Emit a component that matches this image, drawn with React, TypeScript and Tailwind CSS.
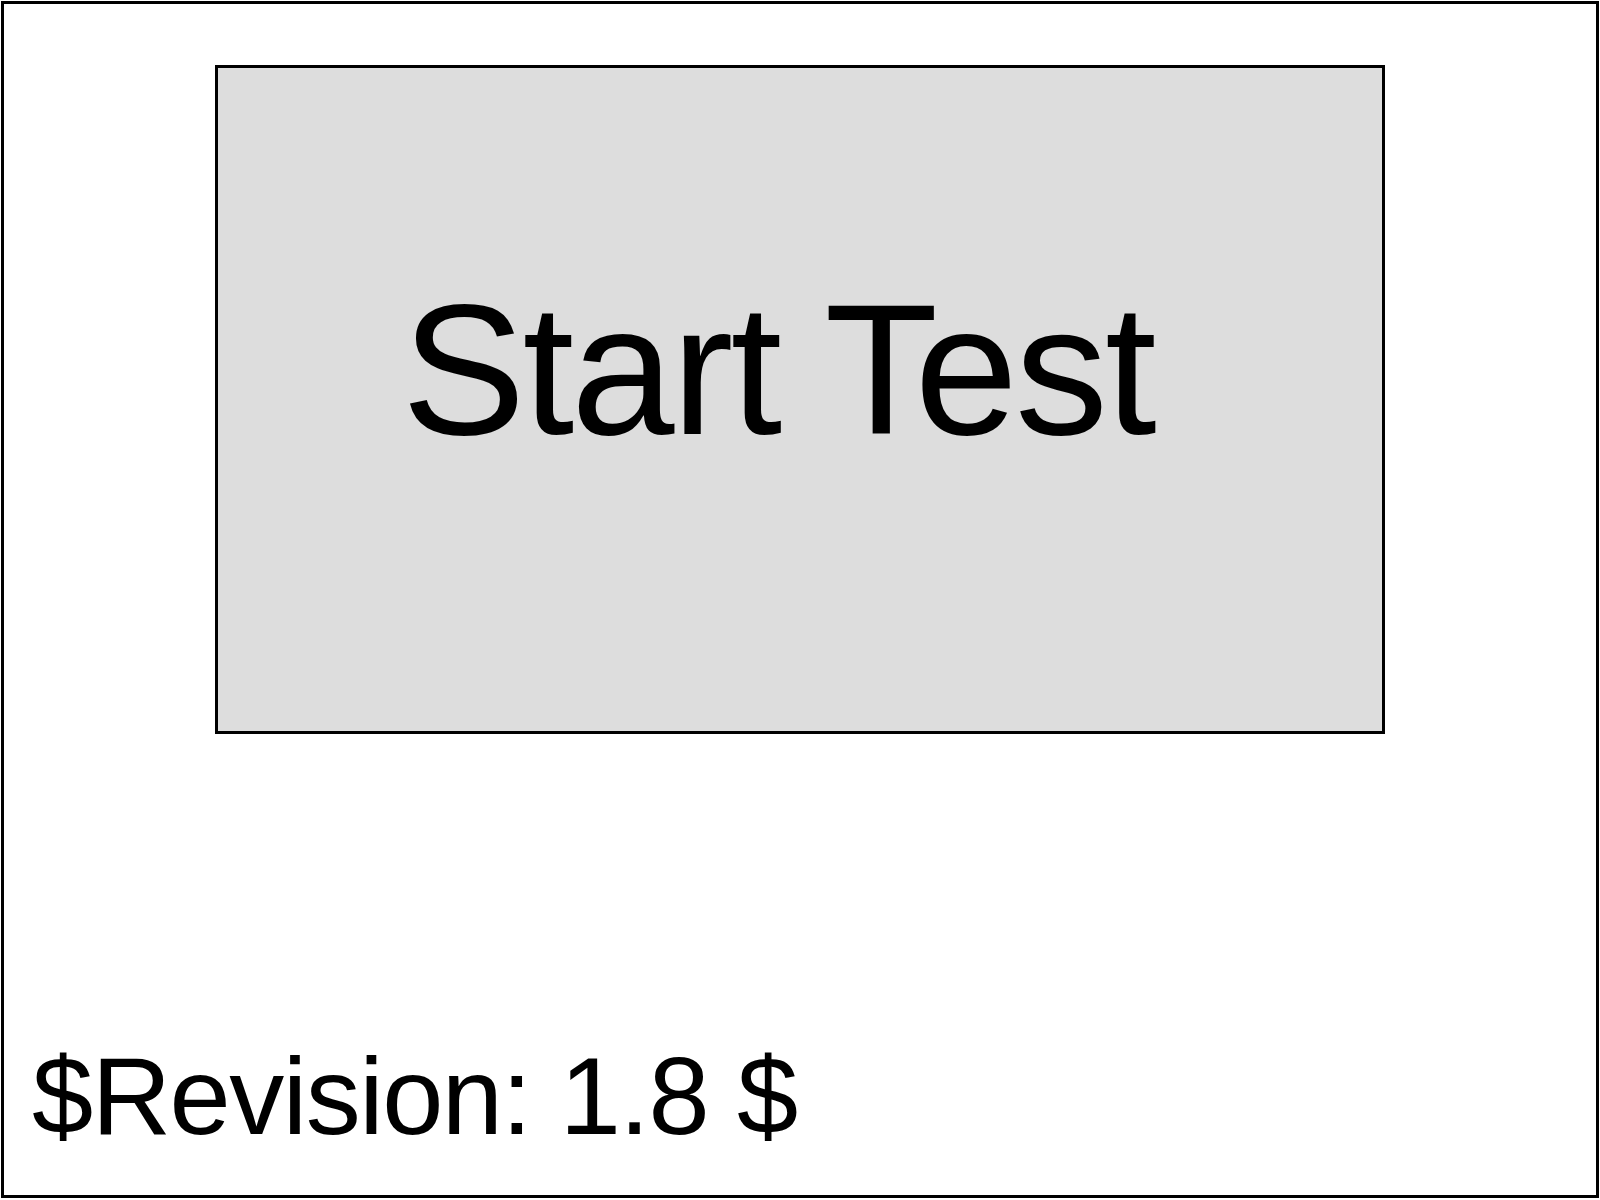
export default function App() {
  return (
    <div className="w-[1600px] h-[1200px] bg-white pl-px pt-px" style={{ fontFamily: '"Liberation Sans", Arial, sans-serif' }}>
      <div className="w-[1598px] h-[1197px] border-[3px] border-black flex flex-col">
        <div className="ml-[211px] mt-[61px] w-[1170px] h-[669px] border-[3px] border-black bg-[#dddddd] pt-[209px] pr-[45px] text-center">
          <div className="text-[186px] leading-none tracking-[-3px] text-black">Start Test</div>
        </div>
        <div className="mt-[307px] pl-[28px] text-[110px] leading-none tracking-[-1.5px] text-black">$Revision: 1.8 $</div>
      </div>
    </div>
  );
}
